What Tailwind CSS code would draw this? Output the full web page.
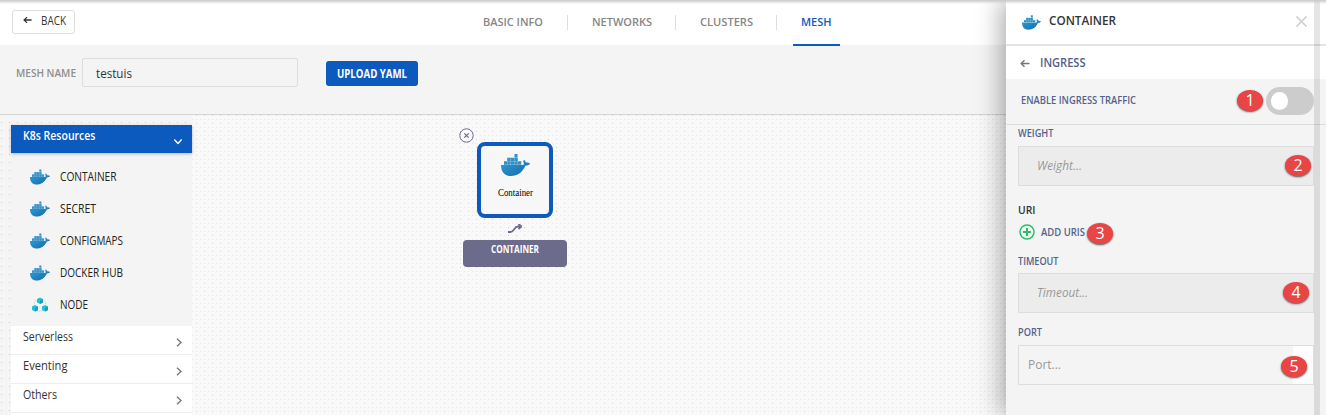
<!DOCTYPE html>
<html lang="en"><head><meta charset="utf-8"><title>Mesh</title>
<script src="https://cdn.jsdelivr.net/npm/@tailwindcss/browser@4"></script></head>
<body class="w-[1326px] h-[415px] overflow-hidden relative bg-white font-['Open_Sans',sans-serif] text-[12px] leading-4 text-[#333] **:data-w:inline-block **:data-w:whitespace-nowrap **:data-w:shrink-0 **:data-w:origin-left">
<svg class="absolute w-0 h-0"><defs>
<linearGradient id="wg" x1="0" y1="0" x2="1" y2="1"><stop offset="0" stop-color="#3b9ed5"/><stop offset="1" stop-color="#0b68ab"/></linearGradient>
<symbol id="whale" viewBox="0 0 29 22"><path fill="url(#wg)" d="M0 11H20.500C22 11 23 10.500 23 9.500C22 8.500 22 7 23 5.700C24 6.500 24.800 7.500 24.700 8.500C26 8.300 28 8.500 29 9.500C28 11.200 26.200 11.800 24.500 11.500C21.500 18.500 16 22 10 22C3.500 22 0 18 0 11Z"/><path fill="#8bc3e2" d="M3 7h17.500v4H3zM6 3.600h11V7H6z"/><path fill="#2f92ca" d="M3 7.500h3v3H3zM6.500 7.500h3v3h-3zM10 7.500h3v3h-3zM13.500 7.500h3v3h-3zM17 7.500h3v3h-3zM6.500 4h3v3h-3zM10 4h3v3h-3zM13.500 4h3v3h-3zM13.500 0h3v3.500h-3z"/></symbol>
<symbol id="back" viewBox="0 0 10 8"><path d="M9.500 4H1.200M4.500.8L1.200 4l3.300 3.200" fill="none" stroke="currentColor" stroke-width="1.400"/></symbol>
<symbol id="chev" viewBox="0 0 6 9"><path d="M1 .8L5 4.500 1 8.200" fill="none" stroke="currentColor" stroke-width="1.400"/></symbol>
<pattern id="dots" width="8" height="8" patternUnits="userSpaceOnUse"><path fill="#cfcfcf" d="M4 0h1v1H4z"/><path fill="#e6e6e6" d="M0 4h1v1H0z"/><path fill="#f1f1f1" d="M3 4h3v1H3zM0 0h1v1H0z"/></pattern>
<pattern id="dotsLeft" width="8" height="8" patternUnits="userSpaceOnUse"><path fill="#c8c8c8" d="M1 7h1v1H1z"/></pattern>
</defs></svg>
<header class="h-[45px] flex">
<div class="w-[75px] pl-3 pt-[10px]"><button class="w-[63px] h-6 rounded-[3px] border border-[#ddd] flex items-center pl-[10px]"><svg class="w-[9px] h-2 -mt-1 shrink-0"><use href="#back"/></svg><span data-w="25" class="ml-[9px] -mt-[2px]">BACK</span></button></div>
<nav class="ml-[408px] flex items-start text-[11.5px] font-semibold text-[#868686]">
<div class="w-[84px] mt-[14px]"><span data-w="60">BASIC INFO</span></div><i class="w-px h-[15px] mt-[15px] bg-[#ddd]"></i>
<div class="w-[107px] pl-6 mt-[14px]"><span data-w="60">NETWORKS</span></div><i class="w-px h-[15px] mt-[15px] bg-[#ddd]"></i>
<div class="w-[100px] pl-6 mt-[14px]"><span data-w="53">CLUSTERS</span></div><i class="w-px h-[15px] mt-[15px] bg-[#ddd]"></i>
<div class="ml-4 w-[47px] pl-2 h-[46px] pt-[14px] border-b-2 border-[#0d5abe] text-[#0d5abe]"><span data-w="30.5">MESH</span></div></nav>
</header>
<section class="h-[70px] bg-[#f4f4f4] border-b border-[#d4d4d4] flex items-start">
<label class="w-[66px] ml-4 mt-[20px] text-[11.5px] font-semibold text-[#8f8f8f]"><span data-w="60">MESH NAME</span></label>
<div class="w-[216px] h-[29px] mt-[13px] border border-[#ddd] rounded-[2px] pl-[13px] pt-[6px] text-[13px]"><span data-w="36">testuis</span></div>
<button class="w-[92px] h-[25px] mt-[16px] ml-7 bg-[#0d5abe] rounded-[3px] text-white text-[11.5px] font-bold leading-[24px] text-left pl-[11px]"><span data-w="70">UPLOAD YAML</span></button>
</section>
<main class="h-[300px] relative bg-[#f9f9f9]">
<svg class="absolute inset-0 w-full h-full"><rect x="192" width="1134" height="300" fill="url(#dots)"/><rect width="192" height="300" fill="#f5f5f5"/><rect width="192" height="300" fill="url(#dotsLeft)"/></svg>
<aside class="relative ml-[11px] pt-[10px] w-[192px] pr-[11px] text-[12px]">
<div class="h-7 bg-[#0d5abe] text-white font-semibold flex justify-between pl-3 pr-[9px] pt-[3px] relative shadow-[0_1px_3px_rgba(0,0,0,0.25)]"><span data-w="72.500">K8s Resources</span><svg class="w-[6px] h-[9px] mt-[9px] mr-[2px] rotate-90"><use href="#chev"/></svg></div>
<div class="h-[173px] bg-[#f4f4f4] pt-2 pl-[19px] text-[12px] text-[#222]">
<div class="h-8 flex items-center gap-[10px]"><svg class="w-5 h-4"><use href="#whale"/></svg><span data-w="56.500">CONTAINER</span></div>
<div class="h-8 flex items-center gap-[10px]"><svg class="w-5 h-4"><use href="#whale"/></svg><span data-w="36">SECRET</span></div>
<div class="h-8 flex items-center gap-[10px]"><svg class="w-5 h-4"><use href="#whale"/></svg><span data-w="63">CONFIGMAPS</span></div>
<div class="h-8 flex items-center gap-[10px]"><svg class="w-5 h-4"><use href="#whale"/></svg><span data-w="63">DOCKER HUB</span></div>
<div class="h-8 flex items-center gap-[10px]"><svg class="w-5 h-4" viewBox="0 0 20 16"><path fill="none" stroke="#d5dfe3" d="M4 7.500Q4 4 7 3M16 7.500Q16 4 13 3M7 14h6"/><path fill="#25c0d8" d="M10 .5l3 1.500v3.500l-3 1.500-3-1.500V2zM5 8l3 1.500V13l-3 1.500L2 13V9.500zM15 8l3 1.500V13l-3 1.500-3-1.500V9.500z"/><path fill="#10a0ba" d="M10 3.500l3-1.500v3.500L10 7zM5 11l3-1.500V13l-3 1.500zM15 11l3-1.500V13l-3 1.500z"/></svg><span data-w="28">NODE</span></div>
</div>
<div class="h-[29px] bg-white border-b border-[#eee] flex justify-between pl-3 pr-[10px] pt-[3px]"><span data-w="50">Serverless</span><svg class="w-[6px] h-[9px] mt-[9px] text-[#777]"><use href="#chev"/></svg></div>
<div class="h-[29px] bg-white border-b border-[#eee] flex justify-between pl-3 pr-[10px] pt-[3px]"><span data-w="44.500">Eventing</span><svg class="w-[6px] h-[9px] mt-[9px] text-[#777]"><use href="#chev"/></svg></div>
<div class="h-[29px] bg-white border-b border-[#eee] flex justify-between pl-3 pr-[10px] pt-[3px]"><span data-w="34">Others</span><svg class="w-[6px] h-[9px] mt-[9px] text-[#777]"><use href="#chev"/></svg></div>
<div class="h-3 bg-white"></div>
</aside>
<div class="absolute left-[463px] top-[27px] w-[104px] flex flex-col items-center">
<div class="w-[76px] h-[76px] rounded-[8px] border-4 border-[#0d5abe] bg-[#f7f7f7] flex flex-col items-center pt-[8px]"><svg class="w-[29px] h-[22px]"><use href="#whale"/></svg><div class="mt-[9px] w-[35px] font-['Liberation_Serif',serif] text-[10px] text-black"><span data-w="35">Container</span></div></div>
<svg class="w-[14px] h-[9px] mt-[6px]" viewBox="0 0 14 9"><path d="M0 8h2.500C6 8 6 2.500 10 2.500h2M10.500 0l3 2.500-3 2.500" fill="none" stroke="#6c6b8c" stroke-width="1.800"/></svg>
<div class="w-[104px] h-[27px] mt-[7px] rounded-[4px] bg-[#6c6b8c] text-white text-[10px] font-bold pl-7 pt-[1px]"><span data-w="48">CONTAINER</span></div></div>
<svg class="absolute left-[459px] top-[13px] w-[15px] h-[15px]" viewBox="0 0 15 15"><circle cx="7.500" cy="7.500" r="6.700" fill="#f9f9f9" stroke="#6c6b8c"/><path d="M5.300 5.300l4.400 4.400M9.700 5.300L5.300 9.700" stroke="#6c6b8c" stroke-width="1.200"/></svg>
</main>
<aside class="absolute left-[1006px] top-0 w-[320px] h-[415px] bg-[#f4f4f4] shadow-[-4px_0_24px_rgba(0,0,0,0.35)]">
<div class="h-[46px] bg-white border-b-2 border-[#e4e4e4] flex items-start"><svg class="w-[19px] h-[15px] mt-[15px] ml-4"><use href="#whale"/></svg><b data-w="67" class="ml-2 mt-[13px] text-[12.500px] font-semibold">CONTAINER</b><svg class="ml-auto mr-[19px] mt-4 w-[11px] h-[11px]" viewBox="0 0 11 11"><path d="M.5.5l10 10M10.500.5l-10 10" stroke="#ccc" stroke-width="1.500"/></svg></div>
<div class="h-[33px] bg-white flex items-start text-[#53628b]"><svg class="w-[10px] h-[9px] mt-[13px] ml-[14px] text-[#777]"><use href="#back"/></svg><b data-w="45.500" class="ml-[10px] mt-[9px] font-semibold">INGRESS</b></div>
<div class="h-[46px] border-b border-[#ddd] flex items-start text-[10px] text-[#53628b]"><b data-w="115" class="ml-[15px] mt-[13px] font-semibold">ENABLE INGRESS TRAFFIC</b><div class="ml-auto mr-[12px] mt-[8px] w-12 h-7 rounded-full bg-[#ccc] pl-[5px] pt-[5px]"><div class="w-[17px] h-[18px] rounded-full bg-white"></div></div></div>
<div class="pl-3 w-[308px] text-[10px] text-[#53628b] font-semibold">
<div class="h-[21px]"><span data-w="35.500">WEIGHT</span></div>
<div class="h-10 bg-[#ececec] border border-[#ddd] pl-[18px] pt-[11px] text-[12px] italic font-normal text-[#999]"><span data-w="45">Weight...</span></div>
<div class="h-[36px] pt-[16px] text-[11px] text-[#333]"><span data-w="17.500">URI</span></div>
<div class="h-[31px] pt-[2px] flex items-start"><svg class="w-4 h-4 ml-px" viewBox="0 0 16 16"><path d="M8 4v8M4 8h8" stroke="#27c06c" stroke-width="2"/><circle cx="8" cy="8" r="7" fill="none" stroke="#27c06c" stroke-width="1.500"/></svg><span data-w="44" class="ml-[6px]">ADD URIS</span></div>
<div class="h-[20px]"><span data-w="40.500">TIMEOUT</span></div>
<div class="h-10 bg-[#ececec] border border-[#ddd] pl-[18px] pt-[11px] text-[12px] italic font-normal text-[#999]"><span data-w="51">Timeout...</span></div>
<div class="h-[32px] pt-[11px]"><span data-w="24">PORT</span></div>
<div class="h-10 border border-[#ddd] pl-[9px] pt-[11px] text-[12px] font-normal text-[#999] bg-linear-to-r from-[#f4f4f4] from-[274px] to-[#fdfdfd] to-[274px]"><span data-w="33">Port...</span></div>
</div>
<div class="absolute left-[308px] top-0 w-[6px] h-full bg-black/10"></div>
<b class="absolute left-[231px] top-[90px] w-[26px] h-[21px] rounded-[50%] bg-[#e94545] shadow-[0_1px_2px_#555] text-white text-[16px] font-normal leading-[20px] text-center">1</b>
<b class="absolute left-[279px] top-[155px] w-[26px] h-[21px] rounded-[50%] bg-[#e94545] shadow-[0_1px_2px_#555] text-white text-[16px] font-normal leading-[20px] text-center">2</b>
<b class="absolute left-[81px] top-[223px] w-[26px] h-[21px] rounded-[50%] bg-[#e94545] shadow-[0_1px_2px_#555] text-white text-[16px] font-normal leading-[20px] text-center">3</b>
<b class="absolute left-[277px] top-[282px] w-[26px] h-[21px] rounded-[50%] bg-[#e94545] shadow-[0_1px_2px_#555] text-white text-[16px] font-normal leading-[20px] text-center">4</b>
<b class="absolute left-[275px] top-[356px] w-[26px] h-[21px] rounded-[50%] bg-[#e94545] shadow-[0_1px_2px_#555] text-white text-[16px] font-normal leading-[20px] text-center">5</b>
</aside>
<div class="absolute inset-x-0 top-0 h-1 bg-linear-to-b from-[#c8c8c8] to-transparent"></div>
<script>
// Condense each label to its set width, and again whenever its natural size changes.
const fit = el => { const w = parseFloat(getComputedStyle(el).width); if (w) el.style.transform = `scaleX(${el.dataset.w / w})`; };
const labels = [...document.querySelectorAll('[data-w]')];
const ro = new ResizeObserver(es => es.forEach(e => fit(e.target)));
labels.forEach(el => { fit(el); ro.observe(el); });
addEventListener('load', () => labels.forEach(fit));
</script>
</body></html>
